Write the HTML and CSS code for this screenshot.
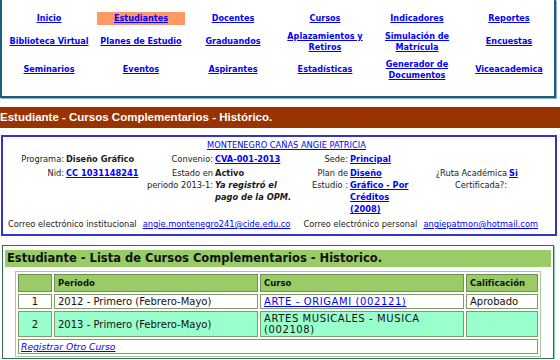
FILE: index.html
```html
<!DOCTYPE html>
<html lang="es">
<head>
    <meta charset="UTF-8">
    <meta name="viewport" content="width=device-width, initial-scale=1.0">
    <title>Estudiante - Cursos Complementarios</title>
    <link rel="stylesheet" href="styles.css">
</head>
<body>
    <div class="menu-frame">
        <ul class="menu">
            <li><a href="#">Inicio</a></li>
            <li class="active"><a href="#">Estudiantes</a></li>
            <li><a href="#">Docentes</a></li>
            <li><a href="#">Cursos</a></li>
            <li><a href="#">Indicadores</a></li>
            <li><a href="#">Reportes</a></li>
            <li><a href="#">Biblioteca Virtual</a></li>
            <li><a href="#">Planes de Estudio</a></li>
            <li><a href="#">Graduandos</a></li>
            <li><a href="#">Aplazamientos y Retiros</a></li>
            <li><a href="#">Simulación de Matrícula</a></li>
            <li><a href="#">Encuestas</a></li>
            <li><a href="#">Seminarios</a></li>
            <li><a href="#">Eventos</a></li>
            <li><a href="#">Aspirantes</a></li>
            <li><a href="#">Estadísticas</a></li>
            <li><a href="#">Generador de Documentos</a></li>
            <li><a href="#">Viceacademica</a></li>
        </ul>
    </div>

    <h1 class="page-title">Estudiante - Cursos Complementarios - Histórico.</h1>

    <div class="student-box">
        <div class="student-name"><a href="#">MONTENEGRO CAÑAS ANGIE PATRICIA</a></div>
        <table class="student-data">
            <colgroup>
                <col style="width: 62px">
                <col style="width: 77px">
                <col style="width: 72px">
                <col style="width: 80px">
                <col style="width: 55px">
                <col style="width: 62px">
                <col style="width: 97px">
                <col style="width: 47px">
            </colgroup>
            <tr>
                <td class="lbl">Programa:</td>
                <td><b>Diseño Gráfico</b></td>
                <td class="lbl">Convenio:</td>
                <td><a href="#"><b>CVA-001-2013</b></a></td>
                <td class="lbl">Sede:</td>
                <td><a href="#"><b>Principal</b></a></td>
                <td></td>
                <td></td>
            </tr>
            <tr>
                <td class="lbl">Nid:</td>
                <td><a href="#"><b>CC 1031148241</b></a></td>
                <td class="lbl">Estado en periodo 2013-1:</td>
                <td><b>Activo</b><br><b><i>Ya registró el pago de la OPM.</i></b></td>
                <td class="lbl">Plan de Estudio :</td>
                <td><a href="#"><b>Diseño Gráfico - Por Créditos (2008)</b></a></td>
                <td class="lbl">¿Ruta Académica Certificada?:</td>
                <td><a href="#"><b>Si</b></a></td>
            </tr>
        </table>
        <div class="student-mail">
            <span>Correo electrónico institucional</span>
            <a href="#">angie.montenegro241@cide.edu.co</a>
            <span class="mail-second">Correo electrónico personal</span>
            <a href="#">angiepatmon@hotmail.com</a>
        </div>
    </div>

    <div class="course-box">
        <h2 class="course-title">Estudiante - Lista de Cursos Complementarios - Historico.</h2>
        <table class="course-table">
            <colgroup>
                <col style="width: 34px">
                <col style="width: 204px">
                <col style="width: 204px">
                <col style="width: 72px">
            </colgroup>
            <tr>
                <th></th>
                <th>Periodo</th>
                <th>Curso</th>
                <th>Calificación</th>
            </tr>
            <tr>
                <td class="num">1</td>
                <td>2012 - Primero (Febrero-Mayo)</td>
                <td class="course-name"><a href="#">ARTE - ORIGAMI (002121)</a></td>
                <td>Aprobado</td>
            </tr>
            <tr class="alt">
                <td class="num">2</td>
                <td>2013 - Primero (Febrero-Mayo)</td>
                <td class="course-name">ARTES MUSICALES - MUSICA (002108)</td>
                <td></td>
            </tr>
            <tr>
                <td colspan="4" class="register"><a href="#">Registrar Otro Curso</a></td>
            </tr>
        </table>
    </div>
</body>
</html>
```

FILE: styles.css
```css
body {
    margin: 0;
    font-family: "Liberation Sans", Arial, sans-serif;
    background-color: #fff;
    color: #1a1a1a;
}
a {
    color: #0000ff;
}

/* top menu */
.menu-frame {
    width: 556px;
    box-sizing: border-box;
    border-left: 2px solid #1f5d80;
    border-right: 2px solid #1f5d80;
    border-bottom: 2px solid #1f5d80;
    box-shadow: 1px 1px 0 #8db3cc;
    padding: 12px 1px 15px 3px;
}
.menu {
    list-style-type: none;
    margin: 0;
    padding: 0;
    display: grid;
    grid-template-columns: repeat(6, 88px);
    grid-template-rows: 13px 23px 23px;
    column-gap: 4px;
    row-gap: 5px;
}
.menu li {
    display: flex;
    align-items: center;
    justify-content: center;
    text-align: center;
    font-family: "DejaVu Sans Condensed", "DejaVu Sans", sans-serif;
    font-stretch: condensed;
    font-size: 9px;
    font-weight: bold;
    line-height: 10.5px;
}
.menu li.active {
    background-color: #ff9966;
}

/* brown title bar */
.page-title {
    margin: 9px 0 0;
    height: 21px;
    background-color: #993300;
    color: #fff;
    font-size: 11.5px;
    font-weight: bold;
    line-height: 21px;
}

/* student data */
.student-box {
    margin: 7px 0 0 1px;
    width: 556px;
    box-sizing: border-box;
    border: 2px solid #3434c8;
    padding: 2px 0 4px;
    font-family: "DejaVu Sans Condensed", "DejaVu Sans", sans-serif;
    font-stretch: condensed;
    font-size: 9.2px;
    line-height: 12px;
}
.student-name {
    text-align: center;
    padding-left: 15px;
}
.student-data {
    border-collapse: collapse;
    table-layout: fixed;
    width: 552px;
    margin-top: 1px;
}
.student-data td {
    padding: 1px;
    vertical-align: top;
}
.student-data .lbl {
    text-align: right;
}
.student-mail {
    display: flex;
    gap: 6px;
    margin-top: 2px;
    padding-left: 5px;
}
.student-mail .mail-second {
    margin-left: 7px;
}

/* course list */
.course-box {
    margin: 9px 0 0 2px;
    width: 552px;
    box-sizing: border-box;
    border: 1px solid #2f6e4f;
    box-shadow: 1px 1px 0 #8fd0b0;
    padding: 4px 2px 1px;
}
.course-title {
    margin: 0;
    height: 17px;
    padding-left: 2px;
    background-color: #99cc66;
    color: #111;
    font-family: "DejaVu Sans", Verdana, sans-serif;
    font-size: 11.5px;
    font-weight: bold;
    line-height: 17px;
}
.course-table {
    margin: 4px 0 0 10px;
    width: 526px;
    table-layout: fixed;
    border: 1px solid #a9c79a;
    border-spacing: 2px;
    font-family: "DejaVu Sans", Verdana, sans-serif;
    font-size: 10px;
    line-height: 11px;
    color: #111;
}
.course-table th {
    background-color: #99cc66;
    border: 1px solid #6f8f53;
    padding: 0 3px;
    text-align: left;
    font-size: 8.5px;
    line-height: 16px;
}
.course-table td {
    border: 1px solid #7d9c66;
    padding: 1px 3px;
}
.course-table .num {
    text-align: center;
}
.course-table .course-name {
    letter-spacing: 0.6px;
}
.course-table .alt td {
    background-color: #99ffcc;
}
.course-table .register {
    padding: 1px 2px;
    font-size: 9.2px;
    font-style: italic;
}
```
